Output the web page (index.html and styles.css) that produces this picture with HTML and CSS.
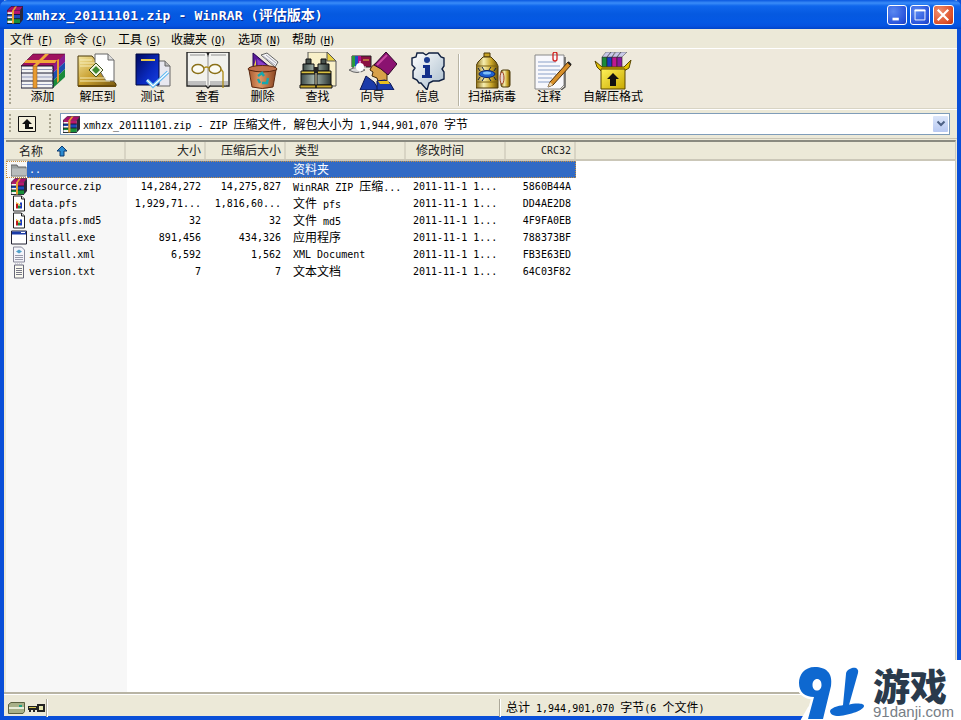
FILE: index.html
```html
<!DOCTYPE html>
<html lang="zh-CN">
<head>
<meta charset="utf-8">
<title>xmhzx_20111101.zip - WinRAR</title>
<link rel="stylesheet" href="styles.css">
</head>
<body>
<svg class="defs" aria-hidden="true">
  <defs>
    <linearGradient id="gGold" x1="0" y1="0" x2="1" y2="1"><stop offset="0" stop-color="#f4e6a0"/><stop offset=".5" stop-color="#c9a030"/><stop offset="1" stop-color="#7a5a10"/></linearGradient>
    <linearGradient id="gNavy" x1="0" y1="0" x2="1" y2="1"><stop offset="0" stop-color="#000a60"/><stop offset=".6" stop-color="#0a2ac0"/><stop offset="1" stop-color="#1840e0"/></linearGradient>
    <linearGradient id="gSteel" x1="0" y1="0" x2="1" y2="0"><stop offset="0" stop-color="#3d4a48"/><stop offset=".45" stop-color="#a8b8b0"/><stop offset="1" stop-color="#2a3432"/></linearGradient>
    <linearGradient id="gCan" x1="0" y1="0" x2="1" y2="0"><stop offset="0" stop-color="#8a6a10"/><stop offset=".35" stop-color="#f6eeb0"/><stop offset=".7" stop-color="#c8a428"/><stop offset="1" stop-color="#6a5008"/></linearGradient>
    <linearGradient id="gBubble" x1="0" y1="0" x2="1" y2="1"><stop offset="0" stop-color="#ffffff"/><stop offset="1" stop-color="#a8bccc"/></linearGradient>
    <linearGradient id="gBin" x1="0" y1="0" x2="1" y2="0"><stop offset="0" stop-color="#a85a30"/><stop offset=".4" stop-color="#e09a68"/><stop offset="1" stop-color="#8a4520"/></linearGradient>
    <linearGradient id="gBox" x1="0" y1="0" x2="1" y2="1"><stop offset="0" stop-color="#fff25a"/><stop offset="1" stop-color="#c8a800"/></linearGradient>
    <symbol id="rar" viewBox="0 0 44 36" preserveAspectRatio="none">
      <path d="M0 13 12 1h32L32 13z" fill="#a0125e" stroke="#400828" stroke-width=".6"/>
      <path d="M32 13 44 1v8L32 20z" fill="#8a1a90"/>
      <path d="M32 20 44 9v7L32 28z" fill="#1d4fb0"/>
      <path d="M32 28 44 16v8L32 35z" fill="#1a8a3a"/>
      <path d="M0 13h32v7H0z" fill="#f4f4f4"/><path d="M0 20h32v8H0z" fill="#e8e8ee"/><path d="M0 28h32v7H0z" fill="#f4f4f4"/>
      <path d="M0 13h32M0 20h32M0 28h32M0 35h32M0 13v22M32 13v22" stroke="#1a1a30" stroke-width="1.200" fill="none"/>
      <path d="M1 16.500h31M1 24h31M1 31.500h31" stroke="#9098b8" stroke-width="1"/>
      <path d="M12 13h4v22h-4z" fill="#e89a30" stroke="#8a5010" stroke-width=".5"/>
      <path d="M12 13 24 1h4L16 13z" fill="#f0a838"/>
      <path d="M5 7h31l-2 3H3z" fill="#f0a838"/>
      <path d="M36 7l2-1v22l-2 2z" fill="#e89a30"/>
    </symbol>
    <symbol id="rars" viewBox="0 0 16 17" preserveAspectRatio="none">
      <path d="M0 4.500 4 .5h12l-3 4z" fill="#a8106a" stroke="#300820" stroke-width=".6"/>
      <path d="M0 4.500h13v3.500H0z" fill="#b8186e"/>
      <path d="M0 8h13v4H0z" fill="#1c4ab8"/>
      <path d="M0 12h13v4.500H0z" fill="#18903a"/>
      <path d="M13 4.500l3-4V5l-3 3zM13 8l3-3v4l-3 3zM13 12l3-3v4l-3 3.500z" fill="#282838"/>
      <path d="M0 6h5v2H0zM0 10h5v2H0zM0 14h5v2H0z" fill="#f4f4f4"/>
      <path d="M0 8h13M0 12h13M0 16.500h13M0 4.500v12" stroke="#101020" stroke-width=".8"/>
      <path d="M5 4.500 8 .5h2L7 4.500v12H5z" fill="#e8a030"/>
    </symbol>
    <symbol id="doc" viewBox="0 0 16 16">
      <path d="M2.500.5h8l3 3v12h-11z" fill="#fff" stroke="#222"/>
      <path d="M10.500.5v3h3" fill="#ddd" stroke="#222"/>
      <path d="M5 8h2v5H5z" fill="#c01818"/><path d="M7 10h2v3H7z" fill="#1a8a3a"/><path d="M9 7h2v6H9z" fill="#1c3cc0"/><path d="M5 7l5 3" stroke="#e8c020"/>
    </symbol>
  </defs>
</svg>

<div class="window">
  <header class="titlebar">
    <svg class="title-icon"><use href="#rars"/></svg>
    <span class="title-text">xmhzx_20111101.zip - WinRAR (<span class="title-cjk">评估版本</span>)</span>
    <div class="caption">
      <span class="cap cap-min"><svg viewBox="0 0 20 20"><path d="M5 13h7v3H5z" fill="#fff"/></svg></span>
      <span class="cap cap-max"><svg viewBox="0 0 20 20"><path d="M4.500 4.500h11v11h-11z" fill="none" stroke="#fff"/><path d="M4 4h12v2H4z" fill="#fff"/></svg></span>
      <span class="cap cap-close"><svg viewBox="0 0 20 20"><path d="M5 5l10 10M15 5 5 15" stroke="#fff" stroke-width="2.400" stroke-linecap="square"/></svg></span>
    </div>
  </header>

  <nav class="menubar">
    <span class="menu m1">文件 <small>(<u>F</u>)</small></span>
    <span class="menu m2">命令 <small>(<u>C</u>)</small></span>
    <span class="menu m3">工具 <small>(<u>S</u>)</small></span>
    <span class="menu m4">收藏夹 <small>(<u>O</u>)</small></span>
    <span class="menu m5">选项 <small>(<u>N</u>)</small></span>
    <span class="menu m6">帮助 <small>(<u>H</u>)</small></span>
  </nav>

  <section class="toolbar">
    <i class="grip"></i>
    <div class="tool">
      <svg class="ico" width="44" height="36" viewBox="0 0 44 36"><use href="#rar" width="44" height="36"/></svg>
      <span>添加</span>
    </div>
    <div class="tool">
      <svg class="ico" width="42" height="36" viewBox="0 0 42 36">
        <path d="M1 3h14l24 28v2H1z" fill="url(#gGold)" stroke="#4a3808"/>
        <path d="M18 1h13l6 6v21l-8 0L18 10z" fill="#fff" stroke="#666"/><path d="M31 1v6h6" fill="#ddd" stroke="#666"/>
        <path d="M3 7h12M3 10h15M3 13h17M3 25h26M3 28h30" stroke="#f6ecb8" stroke-width="1"/>
        <path d="M19 10l7 7-7 7-7-7z" fill="#f4f4e0" stroke="#40501c"/><path d="M19 13l4 4-4 4-4-4z" fill="#3e8a30"/>
        <path d="M1 33h38" stroke="#6a4c0c" stroke-width="2"/>
      </svg>
      <span>解压到</span>
    </div>
    <div class="tool">
      <svg class="ico" width="36" height="36" viewBox="0 0 36 36">
        <path d="M22 8h8l5 5v20H22z" fill="#e8e8f0" stroke="#666"/><path d="M30 8v5h5" fill="#bbb" stroke="#666"/>
        <path d="M1 1h23v31H1z" fill="url(#gNavy)" stroke="#000840"/>
        <path d="M6 7h14" stroke="#e8c84a" stroke-width="2"/>
        <path d="M12 27l6 6L33 19" fill="none" stroke="#60b8f0" stroke-width="3.500"/><path d="M12 27l6 6L33 19" fill="none" stroke="#fff" stroke-width="1.200"/>
      </svg>
      <span>测试</span>
    </div>
    <div class="tool">
      <svg class="ico" width="44" height="38" viewBox="0 0 44 38">
        <path d="M1 0h20l1 3 1-3h20v34H24l-2 2-2-2H1z" fill="#f2f2ee" stroke="#222" stroke-width="1.400"/>
        <path d="M4 3h15M4 33h15M25 33h15M25 3h15M22 3v32" stroke="#909090"/>
        <path d="M2 29h18v4H2zM24 29h18v4H24z" fill="#c0c0c0"/>
        <ellipse cx="12" cy="17" rx="6" ry="4.500" fill="#fbfbf4" stroke="#8a7018" stroke-width="1.400"/>
        <ellipse cx="29" cy="17" rx="6" ry="4.500" fill="#fbfbf4" stroke="#8a7018" stroke-width="1.400"/>
        <path d="M18 16q2.500-2 5 0M35 17l2 3v16" fill="none" stroke="#b09020" stroke-width="1.400"/>
      </svg>
      <span>查看</span>
    </div>
    <div class="tool">
      <svg class="ico" width="32" height="36" viewBox="0 0 32 36">
        <path d="M6 0l18 15H6z" fill="#5a1a9a" stroke="#240850"/>
        <path d="M9 6 6 16h3z" fill="#e8d040"/><path d="M10 6l14 9H11z" fill="#8a40c8"/>
        <path d="M14 2l6-2 11 9-3 5z" fill="#f4f4f4" stroke="#666"/><path d="M16 3l12 9M19 2l10 8" stroke="#aab"/>
        <ellipse cx="15.500" cy="16" rx="14.500" ry="3.500" fill="#c0714a" stroke="#5a2810"/>
        <path d="M2 17l3 17q10 3 21 0l3-17q-13 4-27 0z" fill="url(#gBin)" stroke="#5a2810"/>
        <path d="M11 23l4-3 2 3M21 25l-1 5h-5M11 26l2 4" fill="none" stroke="#16a8b0" stroke-width="2.400"/>
      </svg>
      <span>删除</span>
    </div>
    <div class="tool">
      <svg class="ico" width="38" height="38" viewBox="0 0 38 38">
        <path d="M9 0h19l9 9v25H9z" fill="#f8f0c8" stroke="#555"/><path d="M28 0v9h9z" fill="#e8d040" stroke="#555"/>
        <path d="M7 7h5v5H7zM22 7h5v5h-5z" fill="#48524e" stroke="#111"/>
        <path d="M4 12h11v7H4zM19 12h11v7H19z" fill="url(#gSteel)" stroke="#111"/>
        <path d="M2 19h14v3H2zM18 19h14v3H18z" fill="#d8c040" stroke="#111"/>
        <path d="M2 22h14v11H2zM18 22h14v11H18z" fill="url(#gSteel)" stroke="#111"/>
        <path d="M1 33h16v3H1zM17 33h16v3H17z" fill="#c8a830" stroke="#111"/>
        <path d="M15 15h4v6h-4z" fill="#222"/>
      </svg>
      <span>查找</span>
    </div>
    <div class="tool">
      <svg class="ico" width="48" height="38" viewBox="0 0 48 38">
        <path d="M3 4h19v11H3z" fill="#8a1040" stroke="#222"/>
        <path d="M3 4h3v11H3z" fill="#2a9a3a"/><path d="M6 4h3v11H6z" fill="#1c50c0"/><path d="M9 4h3v11H9z" fill="#b0108a"/><path d="M14 8h6" stroke="#e8d040"/>
        <path d="M0 18q8-5 16 0-8 5-16 0z" fill="#d8d8d8" stroke="#666"/>
        <circle cx="11" cy="15" r="4" fill="#fff"/><path d="M11 9v12M5 15h12" stroke="#fff"/>
        <path d="M11 38l6-14 8 6 5 8z" fill="#1c3caa" stroke="#0a1450"/>
        <path d="M27 11q-6 4-6 7l3 2-1 4 5 2 1 3 9 1V20z" fill="#d8a048" stroke="#3a2408"/>
        <path d="M25 13 37 0l11 12-9 11-7-6z" fill="#8a1270" stroke="#300828"/><path d="M28 13 38 3" stroke="#c848a0" stroke-width="2"/>
        <path d="M28 38V29l8-1 5 3 4 7z" fill="#1c3caa" stroke="#0a1450"/>
        <path d="M29 29h10l2 3H31z" fill="#e8c020"/>
      </svg>
      <span>向导</span>
    </div>
    <div class="tool">
      <svg class="ico" width="36" height="38" viewBox="0 0 36 38">
        <path d="M7 1h6l3 2 3-2h9l3 4 3 1v8l-2 3 2 3v7l-5 2h-6l-4 2-2 7-6-7H9l-2-3-4-2v-7l2-3-3-3V6l4-1z" fill="url(#gBubble)" stroke="#102040" stroke-width="1.400"/>
        <circle cx="17" cy="8" r="3" fill="#1c3c90"/>
        <path d="M13 13h7v10h2v3H12v-3h3v-7h-2z" fill="#14308a"/>
      </svg>
      <span>信息</span>
    </div>
    <i class="sep"></i>
    <div class="tool tool-scan">
      <svg class="ico" width="36" height="38" viewBox="0 0 36 38">
        <path d="M8 1h6v4H8z" fill="#c8a428" stroke="#4a3808"/>
        <path d="M2 10 7 5h8l5 5 2 4v22H0V14z" fill="url(#gCan)" stroke="#4a3808"/>
        <path d="M0 14h22M0 30h22" stroke="#7a6010"/>
        <ellipse cx="11" cy="22" rx="8" ry="3.500" fill="#1c60d0" stroke="#0a2060"/><ellipse cx="11" cy="21" rx="4" ry="1.500" fill="#80c0f8"/>
        <path d="M4 19l-2-3M8 18l-2-3M13 18l2-3M18 19l2-3M4 25l-2 3M8 26l-2 3M13 26l2 3M18 25l2 3" stroke="#102040"/>
        <rect x="25" y="18" width="9" height="17" rx="2" fill="url(#gCan)" stroke="#4a3808"/>
        <ellipse cx="26" cy="26" rx="2" ry="6" fill="#e8d8d0" stroke="#a04020"/>
      </svg>
      <span>扫描病毒</span>
    </div>
    <div class="tool tool-note">
      <svg class="ico" width="38" height="38" viewBox="0 0 38 38">
        <path d="M1 3h29v30L26 37H1z" fill="#f8f8fc" stroke="#888"/><path d="M31 5v30l-4 3" stroke="#555" fill="none" stroke-width="1.400"/>
        <path d="M4 10h18M4 14h22M4 18h22M4 22h18M4 26h14M4 30h12" stroke="#8aa0c8"/>
        <rect x="19" y="0" width="4" height="9" rx="2" fill="none" stroke="#d02020" stroke-width="1.300"/>
        <path d="M34 10 16 30l-2 5 5-2 18-20z" fill="#d8902a" stroke="#4a2c08"/><path d="M14 35l2-5 3 3z" fill="#f0d8b0"/><path d="M34 10l3 3" stroke="#222" stroke-width="2"/>
      </svg>
      <span>注释</span>
    </div>
    <div class="tool tool-sfx">
      <svg class="ico" width="38" height="38" viewBox="0 0 38 38">
        <path d="M8 5h5v12H8z" fill="#1a8a3a" stroke="#222" stroke-width=".6"/><path d="M13 5h5v12h-5z" fill="#1c3cc0" stroke="#222" stroke-width=".6"/><path d="M18 5h5v12h-5z" fill="#c01890" stroke="#222" stroke-width=".6"/><path d="M23 5h5v12h-5z" fill="#8a1aa0" stroke="#222" stroke-width=".6"/>
        <path d="M8 5l4-5h5l-4 5zM13 5l4-5h4l-3 5zM18 5l4-5h5l-4 5zM23 5l4-5h6l-5 5z" fill="#c8c8e8" stroke="#444" stroke-width=".5"/>
        <path d="M1 9l7 6h22l7-7-2 8-5 3H7L3 15z" fill="#e0c000" stroke="#5a4800"/>
        <path d="M7 17h24v20H7z" fill="url(#gBox)" stroke="#5a4800"/>
        <path d="M19 21l6 6h-3v7h-6v-7h-3z" fill="#111"/>
      </svg>
      <span>自解压格式</span>
    </div>
  </section>

  <section class="addressbar">
    <i class="grip grip-short"></i>
    <span class="upbtn"><svg viewBox="0 0 18 16" width="18" height="16"><path d="M.500.500h17v15h-17z" fill="#f4f0dc" stroke="#111"/><path d="M9 3l5 5h-3v3h4v2H7V8H4z" fill="#111"/></svg></span>
    <i class="grip grip-short grip-addr"></i>
    <div class="combo">
      <svg class="combo-icon"><use href="#rars"/></svg>
      <span class="combo-text">xmhzx_20111101.zip - ZIP <b>压缩文件</b>, <b>解包大小为</b> 1,944,901,070 <b>字节</b></span>
      <span class="combo-btn"><svg viewBox="0 0 10 8" width="10" height="8"><path d="M1.500 1.500 5 5l3.500-3.500" fill="none" stroke="#4d6185" stroke-width="2"/></svg></span>
    </div>
  </section>

  <section class="list">
    <div class="row head">
      <span class="col c-name">名称<svg class="sort" viewBox="0 0 12 12" width="12" height="12"><path d="M6 1l5 5H8v5H4V6H1z" fill="#2a8ad0" stroke="#0c3a70"/></svg></span>
      <span class="col c-num">大小</span>
      <span class="col c-num">压缩后大小</span>
      <span class="col c-type">类型</span>
      <span class="col c-date">修改时间</span>
      <span class="col c-crc mono">CRC32</span>
    </div>

    <div class="row item selected">
      <span class="col c-name"><svg class="file" viewBox="0 0 16 16"><path d="M0 3.500h6l1 2h8v9H0z" fill="#9aa0a0" stroke="#666"/><path d="M1 7h14v7H1z" fill="#b8bcbc"/></svg><span class="fname mono">..</span></span>
      <span class="col c-num"></span><span class="col c-num"></span>
      <span class="col c-type">资料夹</span>
      <span class="col c-date"></span><span class="col c-crc"></span>
    </div>
    <div class="row item">
      <span class="col c-name"><svg class="file"><use href="#rars"/></svg><span class="fname mono">resource.zip</span></span>
      <span class="col c-num mono">14,284,272</span><span class="col c-num mono">14,275,827</span>
      <span class="col c-type"><span class="mono">WinRAR ZIP </span>压缩<span class="mono">...</span></span>
      <span class="col c-date mono">2011-11-1 1...</span><span class="col c-crc mono">5860B44A</span>
    </div>
    <div class="row item">
      <span class="col c-name"><svg class="file"><use href="#doc"/></svg><span class="fname mono">data.pfs</span></span>
      <span class="col c-num mono">1,929,71...</span><span class="col c-num mono">1,816,60...</span>
      <span class="col c-type">文件<span class="mono"> pfs</span></span>
      <span class="col c-date mono">2011-11-1 1...</span><span class="col c-crc mono">DD4AE2D8</span>
    </div>
    <div class="row item">
      <span class="col c-name"><svg class="file"><use href="#doc"/></svg><span class="fname mono">data.pfs.md5</span></span>
      <span class="col c-num mono">32</span><span class="col c-num mono">32</span>
      <span class="col c-type">文件<span class="mono"> md5</span></span>
      <span class="col c-date mono">2011-11-1 1...</span><span class="col c-crc mono">4F9FA0EB</span>
    </div>
    <div class="row item">
      <span class="col c-name"><svg class="file" viewBox="0 0 16 16"><path d="M.500 1.500h15v13H.500z" fill="#fff" stroke="#223"/><path d="M1 2h14v3H1z" fill="#1c3ca8"/><path d="M10 3h4" stroke="#fff"/></svg><span class="fname mono">install.exe</span></span>
      <span class="col c-num mono">891,456</span><span class="col c-num mono">434,326</span>
      <span class="col c-type">应用程序</span>
      <span class="col c-date mono">2011-11-1 1...</span><span class="col c-crc mono">788373BF</span>
    </div>
    <div class="row item">
      <span class="col c-name"><svg class="file" viewBox="0 0 16 16"><path d="M2.500.500h8l3 3v12h-11z" fill="#f4f4fa" stroke="#889"/><path d="M5 5l3-2 3 2-3 2z" fill="#50a0c8"/><path d="M4 9h8M4 11h8M4 13h8" stroke="#99a"/></svg><span class="fname mono">install.xml</span></span>
      <span class="col c-num mono">6,592</span><span class="col c-num mono">1,562</span>
      <span class="col c-type mono">XML Document</span>
      <span class="col c-date mono">2011-11-1 1...</span><span class="col c-crc mono">FB3E63ED</span>
    </div>
    <div class="row item">
      <span class="col c-name"><svg class="file" viewBox="0 0 16 16"><path d="M3.500 1.500h9v13h-9z" fill="#fbfbf0" stroke="#667"/><path d="M4 1h8" stroke="#aab" stroke-dasharray="1 1" stroke-width="2"/><path d="M5 5h6M5 7h6M5 9h6M5 11h6" stroke="#778"/></svg><span class="fname mono">version.txt</span></span>
      <span class="col c-num mono">7</span><span class="col c-num mono">7</span>
      <span class="col c-type">文本文档</span>
      <span class="col c-date mono">2011-11-1 1...</span><span class="col c-crc mono">64C03F82</span>
    </div>
  </section>

  <footer class="statusbar">
    <svg class="drive" viewBox="0 0 17 12" width="17" height="12"><path d="M.500 2.500 3 .500h13.500v9L15 11.500H.500z" fill="#a8b088" stroke="#5a6040"/><path d="M1 5h15v2H1z" fill="#e8ecd8"/><path d="M11 3h3v2h-3z" fill="#20a080"/></svg>
    <svg class="key" viewBox="0 0 17 10" width="17" height="10"><path d="M0 3h9v4H7v2H5V7H3v2H1V7H0z" fill="#222"/><path d="M9 1h8v8H9z" fill="#222"/><path d="M11 3h4v4h-4z" fill="#e8e8b0"/><path d="M1 4h7v1H1z" fill="#d8c850"/></svg>
    <i class="status-sep status-sep-a"></i>
    <i class="status-fill"></i>
    <i class="status-sep"></i>
    <span class="status-text">总计<span class="mono"> 1,944,901,070 </span>字节<span class="mono">(6 </span>个文件<span class="mono">)</span></span>
  </footer>
</div>

<aside class="logo">
  <svg class="logo-mark" viewBox="0 0 76 62" width="76" height="62">
    <path d="M30 0H76V62H5L13 48 30 33z" fill="#fff"/>
    <path d="M20 8C9 8 4 16 4 24c0 9 6 14 15 14L13 60h15l8-33c2-13-5-19-16-19zm2 12c3 0 4.500 2.500 4.500 6s-2 5.500-4.500 5.500-4.500-2-4.500-5.500 2-6 4.500-6z" fill="#0e68d0" stroke="#fff" stroke-width="5" paint-order="stroke" fill-rule="evenodd"/>
    <path d="M57 9c4-1 7 1 6 5L54 46c-1 2-6 2-6 0l3-31c0-3 3-5 6-6z" fill="#0e68d0"/>
    <path d="M35 52c1-4 12-6 15-6h3c7-2 16-2 16 1 0 4-14 9-25 10-6 0-9-2-9-5z" fill="#0e68d0"/>
  </svg>
  <div class="logo-text">
    <strong>游戏</strong>
    <span>91danji.com</span>
  </div>
</aside>
</body>
</html>
```

FILE: styles.css
```css
* { box-sizing: border-box; }
html, body { margin: 0; padding: 0; }
body {
  width: 961px; height: 720px; overflow: hidden; position: relative;
  background: #fff;
  font: 12px/17px "Noto Sans CJK SC", sans-serif;
  color: #000;
}
.defs { position: absolute; width: 0; height: 0; }
.mono { font-family: "DejaVu Sans Mono", monospace; font-size: 10px; }

.window {
  width: 961px; height: 720px;
  display: flex; flex-direction: column;
  background: #ece9d8;
  border-left: 4px solid #0a4fd8;
  border-right: 4px solid #0a4fd8;
  border-bottom: 4px solid #0a4fd8;
}

/* title bar */
.titlebar {
  height: 29px; margin: 0 -4px; padding: 0 7px 0 7px;
  display: flex; align-items: center;
  border-radius: 7px 7px 0 0;
  background: linear-gradient(180deg, #0a58e0 0, #3a8cf8 3px, #0f66ec 6px, #0559e0 14px, #0458e4 22px, #0552e0 26px, #0044c8 29px);
  color: #fff;
}
.title-icon { width: 16px; height: 18px; margin: 0 3px 0 0; flex: none; }
.title-text {
  font: bold 13px/29px "DejaVu Sans Mono", monospace;
  letter-spacing: .2px; text-shadow: 1px 1px 0 #0a2a90; white-space: pre;
}
.title-cjk { font: bold 14px/29px "Noto Sans CJK SC", sans-serif; letter-spacing: 0; }
.caption { margin-left: auto; display: flex; gap: 3px; }
.cap {
  width: 20px; height: 20px; border: 1px solid #fff; border-radius: 3px; display: block;
  background: radial-gradient(circle at 30% 30%, #5a88f0, #2a55dc 70%, #1c3ec0);
}
.cap-close { width: 21px; background: radial-gradient(circle at 30% 30%, #f09070, #dc4e28 70%, #b83010); }
.cap svg { display: block; width: 18px; height: 18px; }

/* menu */
.menubar {
  height: 20px; padding-left: 6px; display: flex; align-items: center;
  font-size: 12px; border-bottom: 1px solid #fff;
}
.menu { white-space: pre; flex: none; }
.menu small { font: 10px "DejaVu Sans Mono", monospace; letter-spacing: -.7px; }
.m1, .m2 { width: 54px; }
.m3 { width: 53px; }
.m4 { width: 67px; }
.m5 { width: 54px; }

/* toolbar */
.toolbar {
  height: 60px; padding: 3px 0 0 5px; display: flex; align-items: flex-start;
  background: #eee9dc; border-bottom: 1px solid #d8d4c4;
}
.grip {
  width: 2px; height: 52px; flex: none; margin-top: 2px;
  background: repeating-linear-gradient(180deg, #a8a490 0 2px, transparent 2px 4px);
}
.tool {
  width: 55px; flex: none; display: flex; flex-direction: column; align-items: center;
  height: 54px; white-space: nowrap;
}
.toolbar .grip + .tool { margin-left: 4px; }
.ico { height: 38px; flex: none; display: block; }
.tool span { line-height: 14px; margin-top: -1px; }
.sep { width: 2px; height: 52px; flex: none; margin: 2px 3px 0 3px; border-left: 1px solid #b8b4a4; border-right: 1px solid #fff; }
.tool-scan { width: 58px; }
.tool-scan .ico { margin-left: 4px; }
.tool-note { width: 56px; }
.tool-note .ico { margin-left: 8px; }
.tool-sfx { width: 62px; margin-left: 5px; }

/* address */
.addressbar {
  height: 30px; padding-left: 5px; display: flex; align-items: center;
  background: #ece9d8; border-top: 1px solid #fff; border-bottom: 1px solid #c8c4b4;
}
.grip-short { height: 20px; margin: 0; }
.upbtn { margin-left: 7px; width: 18px; height: 16px; flex: none; display: block; }
.upbtn svg { display: block; }
.grip-addr { margin-left: 13px; }
.combo {
  margin-left: 9px; width: 890px; height: 22px; flex: none;
  display: flex; align-items: center;
  background: #fff; border: 1px solid #7f9db9; padding: 0 1px 0 2px;
}
.combo-icon { width: 17px; height: 17px; flex: none; }
.combo-text { margin-left: 3px; font: 10px/17px "DejaVu Sans Mono", monospace; white-space: pre; }
.combo-text b { font: 12px/17px "Noto Sans CJK SC", sans-serif; }
.combo-btn {
  margin-left: auto; width: 15px; height: 16px; display: flex; align-items: center; justify-content: center;
  background: linear-gradient(180deg, #dce6fa, #b8c9f2); border-radius: 1px;
}

/* list */
.list {
  flex: 1; margin: 1px 1px 0 2px;
  background: linear-gradient(90deg, #f7f7f7 121px, #fff 121px);
  border-top: 2px solid #8a8a80; border-right: 1px solid #c8c8c0;
  display: flex; flex-direction: column;
}
.row { display: flex; height: 17px; width: 570px; white-space: pre; }
.head {
  width: 100%; height: 19px; flex: none; background: #ece9d8;
  border-bottom: 2px solid #cbc7b8; color: #222;
}
.col { display: block; flex: none; padding: 0 5px; overflow: hidden; }
.c-name { width: 120px; padding: 0 0 0 5px; display: flex; align-items: center; }
.c-num { width: 80px; text-align: right; }
.c-type { width: 120px; padding-left: 7px; line-height: 15px; }
.c-type.mono { line-height: 17px; }
.c-date { width: 100px; padding-left: 7px; }
.c-crc { width: 70px; text-align: right; }
.head .col { border-right: 2px solid #d8d4c4; line-height: 15px; }
.head .c-crc { line-height: 18px; }
.head .c-name { padding-left: 13px; }
.head .c-num { padding-right: 3px; }
.head .c-type { padding-left: 9px; }
.head .c-date { padding-left: 10px; }
.head .c-crc { padding-right: 3px; }
.sort { margin-left: 13px; }
.file { width: 16px; height: 17px; flex: none; display: block; }
.fname { margin-left: 2px; padding-left: 0; }
.selected { background: linear-gradient(90deg, transparent 21px, #316ac5 21px); color: #fff; }
.selected { outline: 1px dotted #c89040; outline-offset: -1px; }

/* status */
.statusbar {
  height: 24px; padding: 5px 0 0 4px; display: flex; align-items: center;
  background: #ece9d8; border-top: 2px solid #b8b4a4; box-shadow: inset 0 1px 0 #fff;
}
.drive { flex: none; }
.key { flex: none; margin-left: 3px; }
.status-sep { width: 2px; height: 18px; flex: none; border-left: 1px solid #aca899; border-right: 1px solid #fff; }
.status-sep-a { margin-left: 1px; }
.status-fill { width: 451px; flex: none; }
.status-text { margin-left: 5px; white-space: pre; }

/* logo overlay */
.logo {
  position: absolute; right: 0; bottom: 0; width: 166px; height: 60px;
  display: flex; align-items: flex-start;
  background: linear-gradient(90deg, transparent 70px, #fff 70px);
}
.logo-mark { flex: none; margin-top: -1px; width: 76px; height: 62px; }
.logo-text { margin-left: 2px; display: flex; flex-direction: column; }
.logo-text strong {
  font: 900 37px/38px "Noto Sans CJK SC", sans-serif; color: #2a3a4c; margin-top: 6px; white-space: nowrap;
}
.logo-text span { font: 15px/15px "Liberation Sans", sans-serif; color: #777e86; white-space: nowrap; }
```
